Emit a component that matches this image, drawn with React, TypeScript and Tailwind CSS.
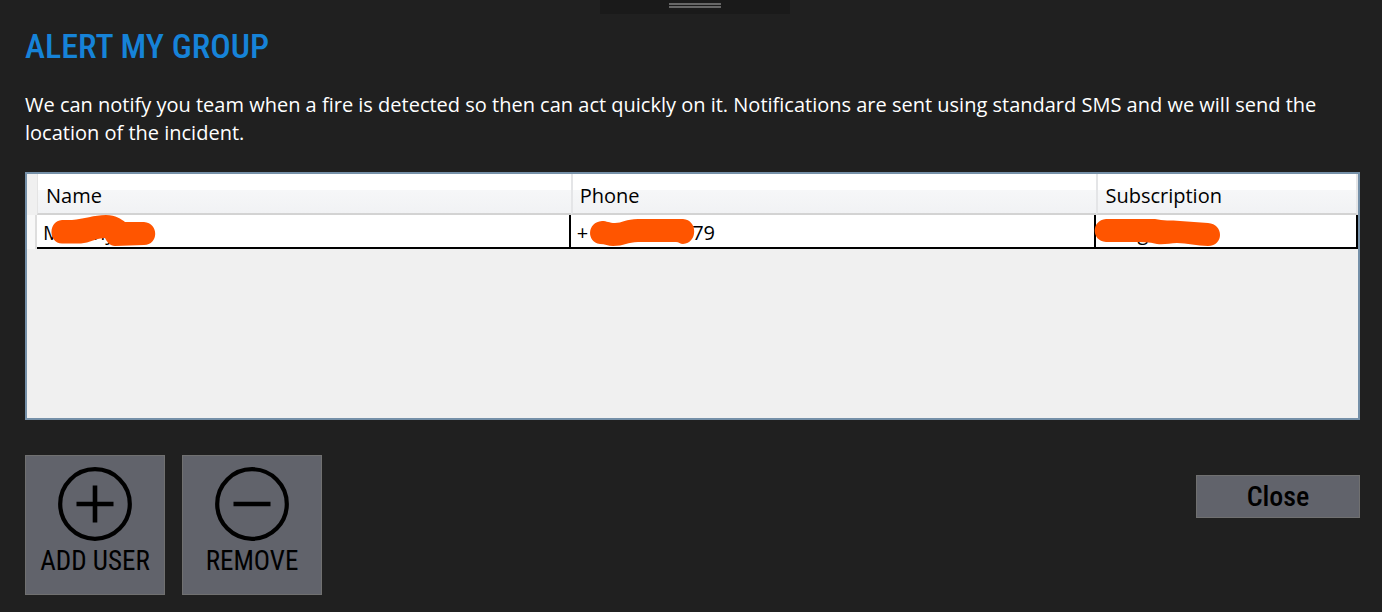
import React from "react";

const condensed = "font-['Roboto_Condensed','Liberation_Sans_Narrow',sans-serif]";

function Scribble({ d }: { d: string }) {
  return (
    <svg aria-hidden="true" viewBox="0 0 126 34" className="pointer-events-none absolute top-0 left-0 h-[34px] w-[126px] overflow-visible">
      <path d={d} fill="#ff5500" />
    </svg>
  );
}

function CircleIcon({ plus }: { plus?: boolean }) {
  return (
    <svg aria-hidden="true" viewBox="0 0 74 74" className="size-[74px]" fill="none" stroke="#000">
      <circle cx="37" cy="37" r="34.8" strokeWidth="4.2" />
      <path d={plus ? "M18.5 37h37M37 18.5v37" : "M18.5 37h37"} strokeWidth="4.6" />
    </svg>
  );
}

function TileButton({ label, plus }: { label: string; plus?: boolean }) {
  return (
    <button type="button" className="flex size-[140px] flex-col items-center border border-[#707070] bg-[#61636b] pt-[11px]">
      <CircleIcon plus={plus} />
      <span className={`${condensed} text-[27px] leading-[40px] whitespace-nowrap text-black`}>{label}</span>
    </button>
  );
}

const headCell =
  "h-[41px] border-b-2 border-b-[#d3d3d3] bg-linear-to-b from-white from-40% via-[#f6f7f8] via-42% to-[#f1f2f4] pt-1 pb-0 text-left font-normal";
const bodyCell = "relative h-[34px] border-r-2 border-b-2 border-black bg-white pt-[3px] pr-0 pb-0 pl-[6px] whitespace-nowrap";

export default function App() {
  return (
    <div className="flex min-h-screen flex-col bg-[#202020] font-['Open_Sans','Noto_Sans',sans-serif] text-[20px] leading-7">
      <div className="flex justify-center pl-[8px]">
        <div className="flex h-[14px] w-[190px] flex-col items-center gap-px bg-[#1a1a1a] pt-[3px]">
          <div className="h-[2px] w-[52px] bg-[#666]" />
          <div className="h-[2px] w-[52px] bg-[#666]" />
        </div>
      </div>
      <main className="flex grow flex-col pr-[22px] pl-[25px]">
        <h1 className={`${condensed} mt-[6px] text-[34px] leading-[52px] font-medium text-[#1683d8]`}>ALERT MY GROUP</h1>
        <p className="mt-[19px] text-white">
          We can notify you team when a fire is detected so then can act quickly on it. Notifications are sent using standard SMS and we will send the location of the incident.
        </p>
        <div className="mt-[25px] h-[248px] border-2 border-[#7590a8] bg-[#f0f0f0]">
          <table className="w-full table-fixed border-separate border-spacing-0 text-black">
            <colgroup>
              <col className="w-[10px]" />
              <col className="w-[40.1%]" />
              <col className="w-[39.5%]" />
              <col />
            </colgroup>
            <thead>
              <tr>
                <td className="p-0" />
                <th scope="col" className={`${headCell} border-l border-l-[#e4e4e4] pl-2`}>Name</th>
                <th scope="col" className={`${headCell} border-l-2 border-l-[#e4e5e7] pl-[7px]`}>Phone</th>
                <th scope="col" className={`${headCell} border-x-2 border-x-[#e4e5e7] pl-[7px]`}>Subscription</th>
              </tr>
            </thead>
            <tbody>
              <tr>
                <td className="border-r-2 border-[#dedede] bg-[#f8f8f8] p-0" />
                <td className={bodyCell}>
                  <span>M</span>
                  <span className="ml-8">ny</span>
                  <Scribble d="M25 5H35C47 4 57 0 69 0C79 0 84 4 88 7H107C122 8 122 30 107 30L78 31C73 31 70 27 68 23C60 23 52 28 44 28.5H25C11 28 11 6 25 5Z" />
                </td>
                <td className={bodyCell}>
                  <span>+</span>
                  <span className="ml-[104px]">79</span>
                  <Scribble d="M31 6C36 6 38 8 44 8C51 8 55 4 67 4H112C127 5 127 28 112 29C109 29 108 27 105 27H67C57 27 53 31 42 31C37 31 34 29 29 29C15 27 16 7 31 6Z" />
                </td>
                <td className={bodyCell}>
                  <span className="ml-[35px]">g</span>
                  <Scribble d="M10 4H59C67 6 75 5 84 6L112 8C128 9 128 31 112 31C101 31 91 28 81 28C74 28 68 30 61 29C53 27 45 27 37 27H10C-5 26 -5 5 10 4Z" />
                </td>
              </tr>
            </tbody>
          </table>
        </div>
        <div className="mt-[35px] flex items-start justify-between">
          <div className="flex gap-[17px]">
            <TileButton label="ADD USER" plus />
            <TileButton label="REMOVE" />
          </div>
          <button type="button" className={`${condensed} mt-5 h-[43px] w-[164px] border border-[#707070] bg-[#61636b] text-[28px] leading-[40px] font-medium text-black`}>Close</button>
        </div>
      </main>
    </div>
  );
}
